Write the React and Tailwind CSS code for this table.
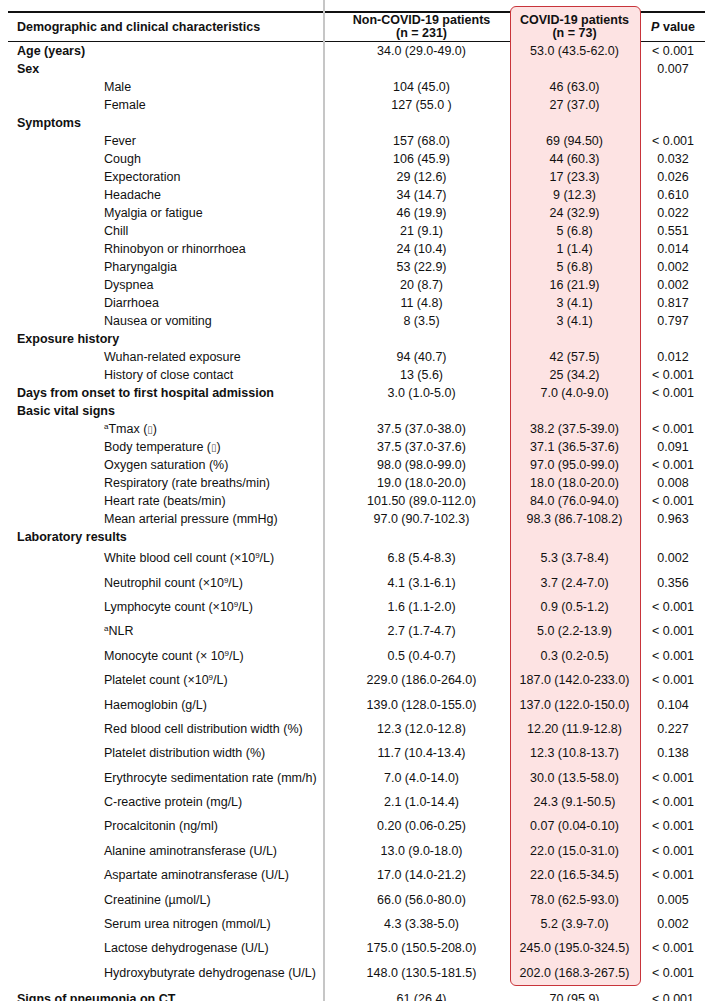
import React from "react";

const NINE = <sup className="text-[8px]">9</sup>;
const BOX = <span className="text-[10px] text-[#555] font-['DejaVu_Sans',sans-serif]">{"\u25AF"}</span>;

const rows = [
  { t: "b", l: "Age (years)", a: "34.0 (29.0-49.0)", c: "53.0 (43.5-62.0)", p: "< 0.001" },
  { t: "b", l: "Sex", a: "", c: "", p: "0.007" },
  { t: "s", l: "Male", a: "104 (45.0)", c: "46 (63.0)", p: "" },
  { t: "s", l: "Female", a: "127 (55.0 )", c: "27 (37.0)", p: "" },
  { t: "b", l: "Symptoms" },
  { t: "s", l: "Fever", a: "157 (68.0)", c: "69 (94.50)", p: "< 0.001" },
  { t: "s", l: "Cough", a: "106 (45.9)", c: "44 (60.3)", p: "0.032" },
  { t: "s", l: "Expectoration", a: "29 (12.6)", c: "17 (23.3)", p: "0.026" },
  { t: "s", l: "Headache", a: "34 (14.7)", c: "9 (12.3)", p: "0.610" },
  { t: "s", l: "Myalgia or fatigue", a: "46 (19.9)", c: "24 (32.9)", p: "0.022" },
  { t: "s", l: "Chill", a: "21 (9.1)", c: "5 (6.8)", p: "0.551" },
  { t: "s", l: "Rhinobyon or rhinorrhoea", a: "24 (10.4)", c: "1 (1.4)", p: "0.014" },
  { t: "s", l: "Pharyngalgia", a: "53 (22.9)", c: "5 (6.8)", p: "0.002" },
  { t: "s", l: "Dyspnea", a: "20 (8.7)", c: "16 (21.9)", p: "0.002" },
  { t: "s", l: "Diarrhoea", a: "11 (4.8)", c: "3 (4.1)", p: "0.817" },
  { t: "s", l: "Nausea or vomiting", a: "8 (3.5)", c: "3 (4.1)", p: "0.797" },
  { t: "b", l: "Exposure history" },
  { t: "s", l: "Wuhan-related exposure", a: "94 (40.7)", c: "42 (57.5)", p: "0.012" },
  { t: "s", l: "History of close contact", a: "13 (5.6)", c: "25 (34.2)", p: "< 0.001" },
  { t: "b", l: "Days from onset to first hospital admission", a: "3.0 (1.0-5.0)", c: "7.0 (4.0-9.0)", p: "< 0.001" },
  { t: "b", l: "Basic vital signs" },
  { t: "s", l: <><sup className="text-[8px]">a</sup>Tmax ({BOX})</>, a: "37.5 (37.0-38.0)", c: "38.2 (37.5-39.0)", p: "< 0.001" },
  { t: "s", l: <>Body temperature ({BOX})</>, a: "37.5 (37.0-37.6)", c: "37.1 (36.5-37.6)", p: "0.091" },
  { t: "s", l: "Oxygen saturation (%)", a: "98.0 (98.0-99.0)", c: "97.0 (95.0-99.0)", p: "< 0.001" },
  { t: "s", l: "Respiratory (rate breaths/min)", a: "19.0 (18.0-20.0)", c: "18.0 (18.0-20.0)", p: "0.008" },
  { t: "s", l: "Heart rate (beats/min)", a: "101.50 (89.0-112.0)", c: "84.0 (76.0-94.0)", p: "< 0.001" },
  { t: "s", l: "Mean arterial pressure (mmHg)", a: "97.0 (90.7-102.3)", c: "98.3 (86.7-108.2)", p: "0.963" },
  { t: "b", l: "Laboratory results" },
];

const lab = [
  { l: <>White blood cell count (×10{NINE}/L)</>, a: "6.8 (5.4-8.3)", c: "5.3 (3.7-8.4)", p: "0.002" },
  { l: <>Neutrophil count (×10{NINE}/L)</>, a: "4.1 (3.1-6.1)", c: "3.7 (2.4-7.0)", p: "0.356" },
  { l: <>Lymphocyte count (×10{NINE}/L)</>, a: "1.6 (1.1-2.0)", c: "0.9 (0.5-1.2)", p: "< 0.001" },
  { l: <><sup className="text-[8px]">a</sup>NLR</>, a: "2.7 (1.7-4.7)", c: "5.0 (2.2-13.9)", p: "< 0.001" },
  { l: <>Monocyte count (× 10{NINE}/L)</>, a: "0.5 (0.4-0.7)", c: "0.3 (0.2-0.5)", p: "< 0.001" },
  { l: <>Platelet count (×10{NINE}/L)</>, a: "229.0 (186.0-264.0)", c: "187.0 (142.0-233.0)", p: "< 0.001" },
  { l: "Haemoglobin (g/L)", a: "139.0 (128.0-155.0)", c: "137.0 (122.0-150.0)", p: "0.104" },
  { l: "Red blood cell distribution width (%)", a: "12.3 (12.0-12.8)", c: "12.20 (11.9-12.8)", p: "0.227" },
  { l: "Platelet distribution width (%)", a: "11.7 (10.4-13.4)", c: "12.3 (10.8-13.7)", p: "0.138" },
  { l: "Erythrocyte sedimentation rate (mm/h)", a: "7.0 (4.0-14.0)", c: "30.0 (13.5-58.0)", p: "< 0.001" },
  { l: "C-reactive protein (mg/L)", a: "2.1 (1.0-14.4)", c: "24.3 (9.1-50.5)", p: "< 0.001" },
  { l: "Procalcitonin (ng/ml)", a: "0.20 (0.06-0.25)", c: "0.07 (0.04-0.10)", p: "< 0.001" },
  { l: "Alanine aminotransferase (U/L)", a: "13.0 (9.0-18.0)", c: "22.0 (15.0-31.0)", p: "< 0.001" },
  { l: "Aspartate aminotransferase (U/L)", a: "17.0 (14.0-21.2)", c: "22.0 (16.5-34.5)", p: "< 0.001" },
  { l: "Creatinine (µmol/L)", a: "66.0 (56.0-80.0)", c: "78.0 (62.5-93.0)", p: "0.005" },
  { l: "Serum urea nitrogen (mmol/L)", a: "4.3 (3.38-5.0)", c: "5.2 (3.9-7.0)", p: "0.002" },
  { l: "Lactose dehydrogenase (U/L)", a: "175.0 (150.5-208.0)", c: "245.0 (195.0-324.5)", p: "< 0.001" },
  { l: "Hydroxybutyrate dehydrogenase (U/L)", a: "148.0 (130.5-181.5)", c: "202.0 (168.3-267.5)", p: "< 0.001" },
];

function Row({ r, h }) {
  const bold = r.t === "b";
  return (
    <div className={`relative z-20 grid grid-cols-[317px_193px_113px_74px] items-center ${h}`}>
      <div className={bold ? "pl-[9px] font-bold whitespace-nowrap" : "pl-[96px] whitespace-nowrap"}>{r.l}</div>
      <div className="text-center whitespace-nowrap">{r.a}</div>
      <div className="text-center whitespace-nowrap">{r.c}</div>
      <div className="pl-[10px] text-center whitespace-nowrap">{r.p}</div>
    </div>
  );
}

export default function App() {
  return (
    <div className="relative w-[725px] h-[1001px] overflow-hidden bg-white text-[#111] text-[12.5px] font-['Liberation_Sans',Arial,sans-serif] leading-[14px]">
      <div className="absolute left-[323px] top-0 w-[2px] h-full bg-[#c6c6c6] z-[5]" />
      <div className="absolute left-[510px] top-[6px] w-[131px] h-[980px] rounded-[6px] border border-[#c8343a] bg-[#fde3e3] z-10" />
      <div className="ml-[8px] mt-[11px] w-[697px]">
        <div className="border-t-2 border-b border-[#111] h-[31px] grid grid-cols-[317px_193px_113px_74px] items-center font-bold">
          <div className="relative z-20 pl-[9px] whitespace-nowrap">Demographic and clinical characteristics</div>
          <div className="relative z-20 text-center leading-[13px]">
            <div>Non-COVID-19 patients</div>
            <div>(n = 231)</div>
          </div>
          <div className="relative z-20 text-center leading-[13px]">
            <div className="whitespace-nowrap">COVID-19 patients</div>
            <div>(n = 73)</div>
          </div>
          <div className="relative z-20 pl-[10px] text-center whitespace-nowrap">
            <i>P</i> value
          </div>
        </div>
        {rows.map((r, i) => (
          <Row key={i} r={r} h="h-[18px]" />
        ))}
        {lab.map((r, i) => (
          <Row key={"l" + i} r={{ ...r, t: "s" }} h="h-[24.4px]" />
        ))}
        <div className="mt-[5px]">
          <Row r={{ t: "b", l: "Signs of pneumonia on CT", a: "61 (26.4)", c: "70 (95.9)", p: "< 0.001" }} h="h-[18px]" />
        </div>
      </div>
    </div>
  );
}
